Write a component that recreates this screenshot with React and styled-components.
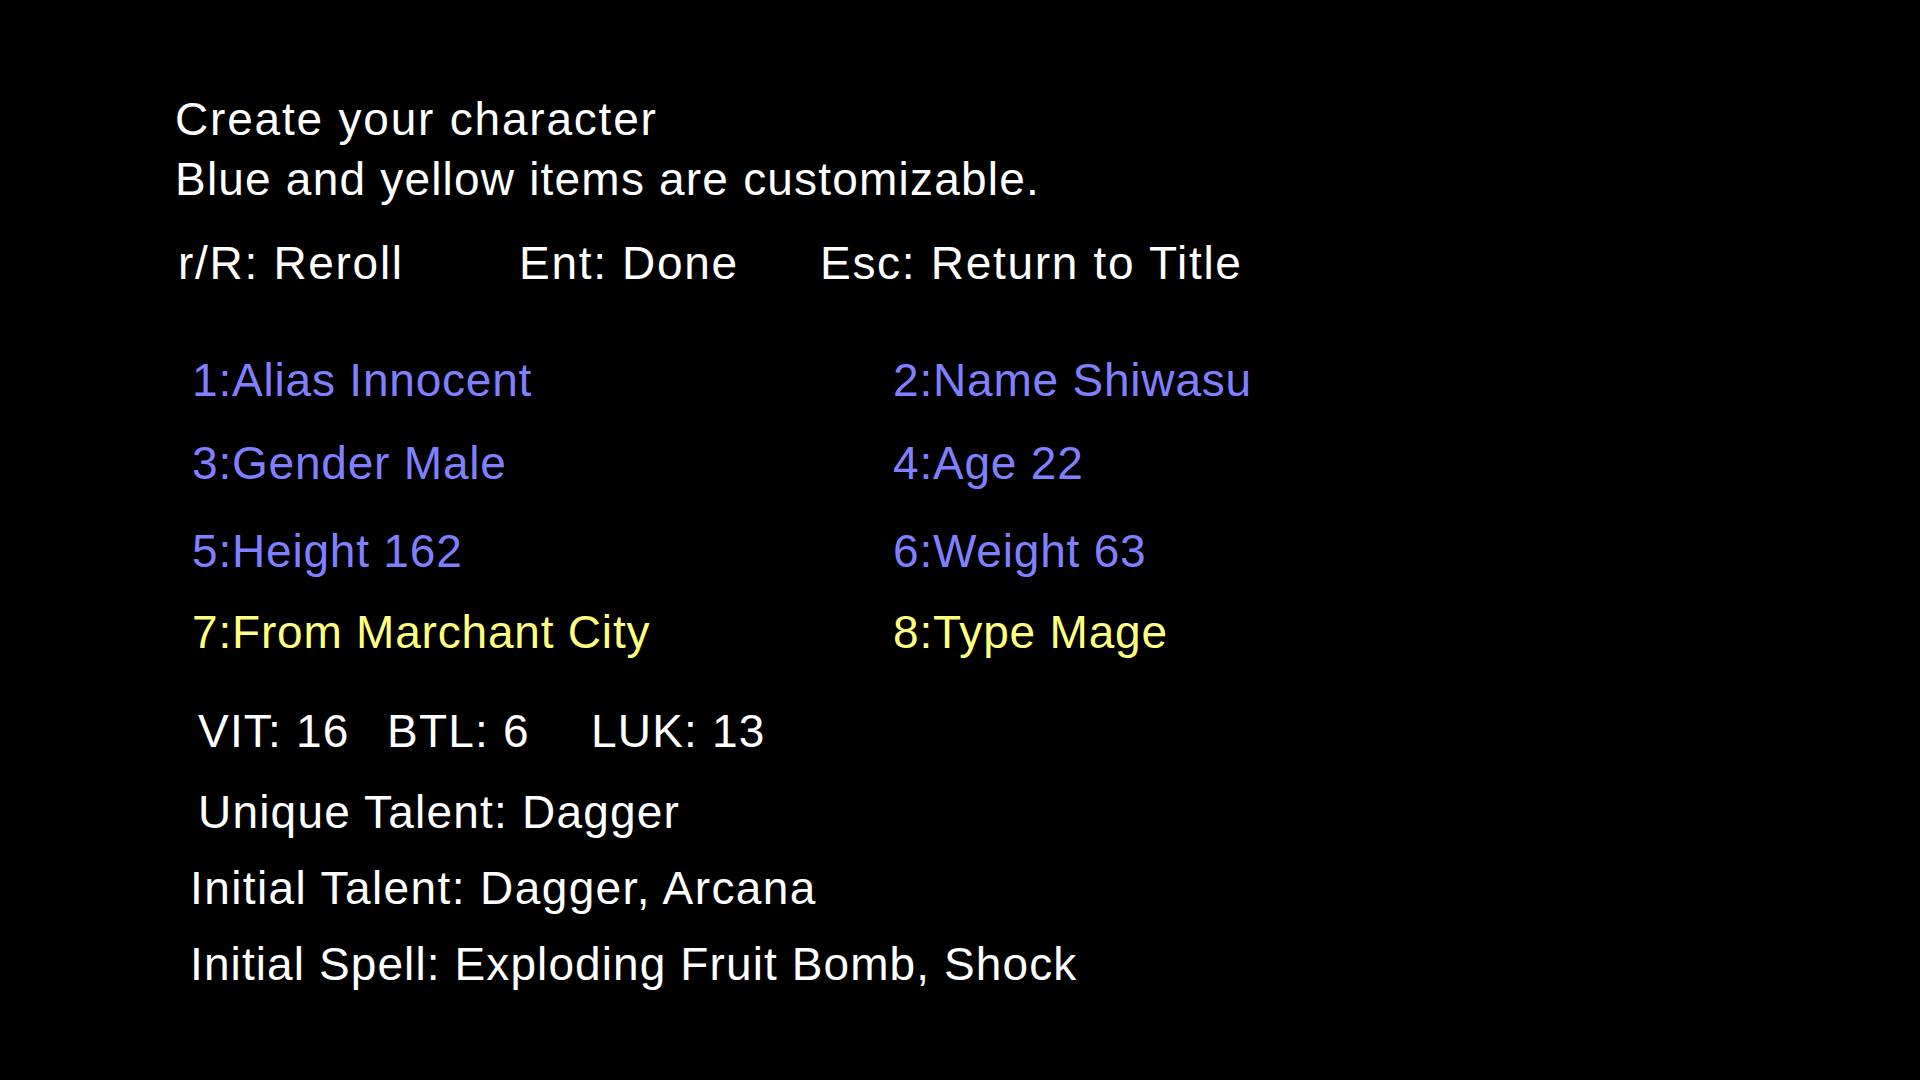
import styled, { createGlobalStyle } from 'styled-components';

const GlobalStyle = createGlobalStyle`
  html, body {
    margin: 0;
    padding: 0;
    background: #000;
  }
  body {
    font-family: "Liberation Sans", Arial, sans-serif;
  }
`

const items = [
  { id: 1, label: 'Alias', value: 'Innocent', tone: 'blue' },
  { id: 2, label: 'Name', value: 'Shiwasu', tone: 'blue' },
  { id: 3, label: 'Gender', value: 'Male', tone: 'blue' },
  { id: 4, label: 'Age', value: '22', tone: 'blue' },
  { id: 5, label: 'Height', value: '162', tone: 'blue' },
  { id: 6, label: 'Weight', value: '63', tone: 'blue' },
  { id: 7, label: 'From', value: 'Marchant City', tone: 'yellow' },
  { id: 8, label: 'Type', value: 'Mage', tone: 'yellow' },
];

const stats = [
  { name: 'VIT', value: 16, width: 189 },
  { name: 'BTL', value: 6, width: 204 },
  { name: 'LUK', value: 13 },
];

const App = () => {
  return (
    <>
      <GlobalStyle />
      <Screen>
        <Header>
          <Line $spacing={1.8}>Create your character</Line>
          <Line $spacing={1.2}>Blue and yellow items are customizable.</Line>
        </Header>

        <Keys>
          <Key $width={341}>r/R: Reroll</Key>
          <Key $width={301}>Ent: Done</Key>
          <Key>Esc: Return to Title</Key>
        </Keys>

        <Options>
          {items.map((item) => (
            <Option key={item.id} $tone={item.tone}>
              {item.id}:{item.label} {item.value}
            </Option>
          ))}
        </Options>

        <Stats>
          {stats.map((s) => (
            <Stat key={s.name} $width={s.width}>{s.name}: {s.value}</Stat>
          ))}
        </Stats>

        <Info $indent={23} $top={21}>Unique Talent: Dagger</Info>
        <Info $indent={15} $top={16} $spacing={1.4}>Initial Talent: Dagger, Arcana</Info>
        <Info $indent={15} $top={16} $spacing={1.1}>Initial Spell: Exploding Fruit Bomb, Shock</Info>
      </Screen>
    </>
  )
}

export default App;

const Screen = styled.main`
  width: 1920px;
  height: 1080px;
  box-sizing: border-box;
  padding: 89px 0 0 175px;
  background: #000;
  color: #fff;
  font-size: 46px;
  letter-spacing: 1.2px;
  line-height: 60px;
  overflow: hidden;
`

const Header = styled.div`
  display: flex;
  flex-direction: column;
`

const Line = styled.div`
  white-space: nowrap;
  letter-spacing: ${(p) => p.$spacing}px;
`

const Keys = styled.div`
  display: flex;
  margin-top: 24px;
  padding-left: 3px;
  letter-spacing: 1.7px;
`

const Key = styled.div`
  flex: 0 0 auto;
  width: ${(p) => (p.$width ? `${p.$width}px` : 'auto')};
  white-space: nowrap;
`

const Options = styled.div`
  display: grid;
  grid-template-columns: 701px 701px;
  grid-template-rows: 83px 88px 81px 60px;
  margin-top: 57px;
  padding-left: 17px;
`

const Option = styled.div`
  white-space: nowrap;
  letter-spacing: 0.8px;
  color: ${(p) => (p.$tone === 'yellow' ? '#ffff80' : '#8080ff')};
`

const Stats = styled.div`
  display: flex;
  margin-top: 39px;
  padding-left: 23px;
`

const Stat = styled.div`
  flex: 0 0 auto;
  width: ${(p) => (p.$width ? `${p.$width}px` : 'auto')};
  white-space: nowrap;
`

const Info = styled.div`
  margin-top: ${(p) => p.$top}px;
  padding-left: ${(p) => p.$indent}px;
  white-space: nowrap;
  letter-spacing: ${(p) => (p.$spacing ?? 1.2)}px;
`
